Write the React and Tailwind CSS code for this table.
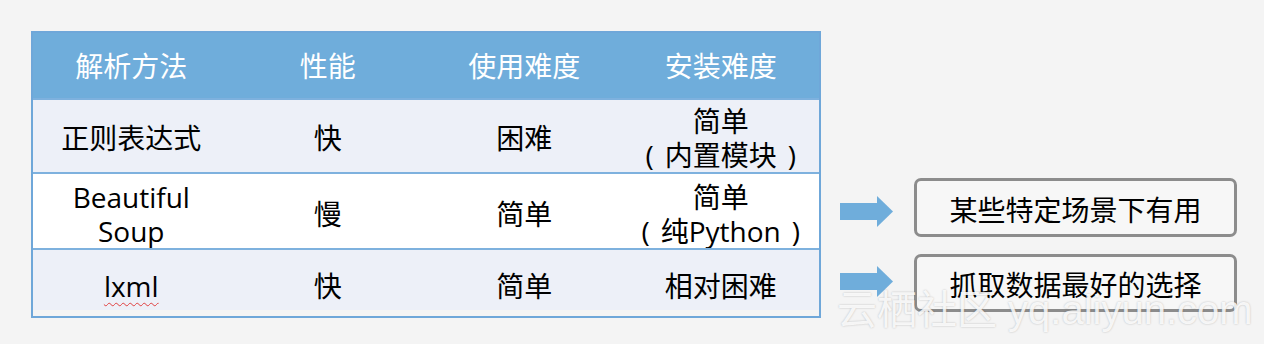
import React from 'react';

const font = "font-['Open_Sans','Noto_Sans_CJK_SC',sans-serif]";

const Paren = ({ side }) =>
  side === 'l' ? <span className="mr-[11px]">(</span> : <span className="ml-[11px]">)</span>;

const rows = [
  {
    bg: 'bg-[#edf0f8]',
    h: 'h-[74px]',
    pad: 'pt-[4px]',
    cells: [['正则表达式'], ['快'], ['困难'], ['简单', <><Paren side="l" />内置模块<Paren side="r" /></>]],
  },
  {
    bg: 'bg-white',
    h: 'h-[76px]',
    pad: 'pt-[6px]',
    cells: [['Beautiful', 'Soup'], ['慢'], ['简单'], ['简单', <><Paren side="l" />纯Python<Paren side="r" /></>]],
  },
  { bg: 'bg-[#edf0f8]', h: 'h-[62px]', pad: 'pt-[12px]', cells: [['lxml'], ['快'], ['简单'], ['相对困难']], squiggle: true },
];

const Arrow = () => (
  <svg width="53" height="31" viewBox="0 0 53 31">
    <rect x="0" y="7" width="38" height="17" fill="#6faddb" />
    <polygon points="37,0 53,15.5 37,31" fill="#6faddb" />
  </svg>
);

export default function App() {
  return (
    <div className={`relative w-[1264px] h-[344px] bg-[#f4f4f4] flex ${font}`}>
      <div className="ml-[31px] mt-[31px] w-[790px] h-[287px] border-2 border-[#6fa7d9] flex flex-col text-[28px] leading-[34px]">
        <div className="grid grid-cols-4 h-[65px] bg-[#6faddb] text-white">
          {['解析方法', '性能', '使用难度', '安装难度'].map((t) => (
            <div key={t} className="flex items-center justify-center">{t}</div>
          ))}
        </div>
        {rows.map((r, i) => (
          <div key={i} className={`grid grid-cols-4 border-t-2 border-[#7eb1de] ${r.bg} ${r.h} text-black`}>
            {r.cells.map((c, j) => (
              <div key={j} className={`flex flex-col items-center justify-center text-center ${r.pad}`}>
                {c.map((line, k) => (
                  <span
                    key={k}
                    className={r.squiggle && j === 0 ? 'underline decoration-wavy decoration-[#e04040] decoration-1 underline-offset-[5px]' : 'whitespace-nowrap'}
                  >
                    {line}
                  </span>
                ))}
              </div>
            ))}
          </div>
        ))}
      </div>

      <div className="ml-[19px] mt-[196px] flex flex-col gap-[39px]">
        <Arrow />
        <Arrow />
      </div>

      <div className="ml-[21px] mt-[178px] flex flex-col gap-[17px] text-[28px] text-black">
        <div className="w-[323px] h-[59px] border-[3px] border-[#8c8c8c] rounded-[7px] bg-[#f7f7f7] flex items-center justify-center pt-[4px]">
          某些特定场景下有用
        </div>
        <div className="w-[323px] h-[58px] border-[3px] border-[#8c8c8c] rounded-[7px] bg-[#f7f7f7] flex items-center justify-center pt-[4px]">
          抓取数据最好的选择
        </div>
      </div>

      <div className="absolute left-[837px] top-[286px] text-[40px] leading-[48px] text-white/85 font-['Liberation_Sans','Noto_Sans_CJK_SC',sans-serif] [text-shadow:0_0_2px_rgba(0,0,0,0.25)] whitespace-nowrap pointer-events-none">
        云栖社区 yq.aliyun.com
      </div>
    </div>
  );
}
